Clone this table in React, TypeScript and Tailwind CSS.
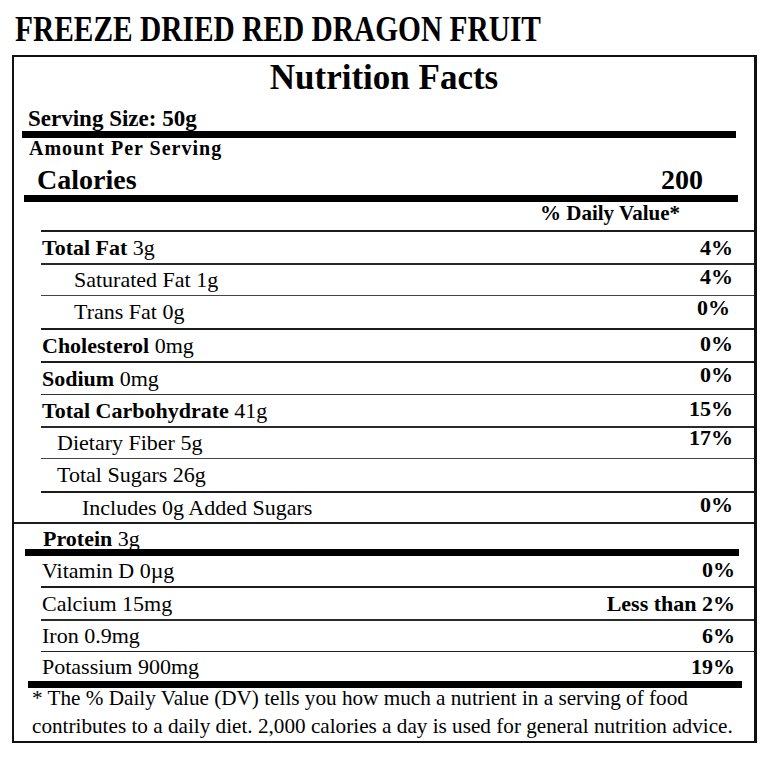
type Row = {
  label: string;
  amount: string;
  bold?: boolean;
  indent: string;
  dv: string;
  box: string;
  dvShift?: string;
};

const fatCarbRows: Row[] = [
  { label: "Total Fat", amount: "3g", bold: true, indent: "pl-[1px]", dv: "4%", box: "h-[33px] border-t-2 border-[#1c1c1c]" },
  { label: "Saturated Fat", amount: "1g", indent: "pl-[33px]", dv: "4%", box: "h-[32px] border-t-2 border-[#2a2a2a]", dvShift: "mb-[6px]" },
  { label: "Trans Fat", amount: "0g", indent: "pl-[33px]", dv: "0%", box: "h-[33px] border-t border-[#444]", dvShift: "mb-[8px] mr-[3px]" },
  { label: "Cholesterol", amount: "0mg", bold: true, indent: "pl-[1px]", dv: "0%", box: "h-[33px] border-t-2 border-[#1c1c1c]", dvShift: "mb-[3px]" },
  { label: "Sodium", amount: "0mg", bold: true, indent: "pl-[1px]", dv: "0%", box: "h-[33px] border-t-2 border-[#1c1c1c]", dvShift: "mb-[7px]" },
  { label: "Total Carbohydrate", amount: "41g", bold: true, indent: "pl-[1px]", dv: "15%", box: "h-[32px] border-t border-[#333]", dvShift: "mb-[3px]" },
  { label: "Dietary Fiber", amount: "5g", indent: "pl-[16px]", dv: "17%", box: "h-[32px] border-t-2 border-[#2a2a2a]", dvShift: "mb-[11px]" },
  { label: "Total Sugars", amount: "26g", indent: "pl-[16px]", dv: "", box: "h-[33px] border-t border-[#444]" },
  { label: "Includes 0g Added Sugars", amount: "", indent: "pl-[41px]", dv: "0%", box: "h-[31px] border-t-2 border-[#1c1c1c]", dvShift: "mb-[6px]" },
];

const mineralRows: Row[] = [
  { label: "Vitamin D", amount: "0µg", indent: "pl-[1px]", dv: "0%", box: "h-[30px]", dvShift: "mb-[3px]" },
  { label: "Calcium", amount: "15mg", indent: "pl-[1px]", dv: "Less than 2%", box: "h-[33px] border-t-2 border-[#1c1c1c]" },
  { label: "Iron", amount: "0.9mg", indent: "pl-[1px]", dv: "6%", box: "h-[32px] border-t-2 border-[#2a2a2a]" },
  { label: "Potassium", amount: "900mg", indent: "pl-[1px]", dv: "19%", box: "h-[30px] border-t border-[#222]" },
];

function NutrientRow({ row, pr }: { row: Row; pr: string }) {
  return (
    <div className={`flex items-center justify-between ml-[27px] ${row.box}`}>
      <span className={`${row.indent} leading-[30px] whitespace-nowrap`}>
        {row.bold ? <span className="font-bold">{row.label}</span> : row.label}
        {row.amount ? ` ${row.amount}` : ""}
      </span>
      <span className={`font-bold leading-[24px] whitespace-nowrap ${pr} ${row.dvShift ?? ""}`}>{row.dv}</span>
    </div>
  );
}

export default function App() {
  return (
    <div className="min-h-screen bg-white text-black font-['Liberation_Serif','Times_New_Roman',serif]">
      <div className="h-[50px] pt-[10px] pl-[15px]">
        <span className="inline-block origin-left scale-x-[0.84] whitespace-nowrap text-[35px] leading-[40px] font-bold">
          FREEZE DRIED RED DRAGON FRUIT
        </span>
      </div>

      <div className="ml-[12px] mt-[5px] w-[745px] border-t-2 border-l-2 border-r-[3px] border-b-2 border-[#111]">
        <h1 className="h-[42px] text-center text-[35px] leading-[42px] font-bold">Nutrition Facts</h1>

        <div className="h-[32px] pt-[8px] pl-[14px] text-[23px] leading-[24px] font-bold">Serving Size: 50g</div>
        <div className="h-[7px] ml-[8px] mr-[18px] bg-black" />

        <div className="h-[21px] pl-[15px] text-[20px] leading-[21px] font-bold tracking-[1px]">Amount Per Serving</div>
        <div className="h-[36px] pt-[5px] pl-[23px] pr-[51px] flex justify-between text-[28px] leading-[31px] font-bold">
          <span>Calories</span>
          <span>200</span>
        </div>
        <div className="h-[7px] ml-[10px] mr-[16px] bg-black" />

        <div className="h-[28px] pr-[74px] text-right text-[21px] leading-[22px] font-bold">% Daily Value*</div>

        <div className="text-[22px]">
          {fatCarbRows.map((r) => (
            <NutrientRow key={r.label} row={r} pr="pr-[21px]" />
          ))}
        </div>

        <div className="h-[27px] border-t-2 border-[#1c1c1c] pt-[3px] pl-[29px] text-[22px] leading-[24px]">
          <span className="font-bold">Protein</span> 3g
        </div>
        <div className="h-[7px] ml-[11px] mr-[15px] bg-black" />

        <div className="text-[22px]">
          {mineralRows.map((r) => (
            <NutrientRow key={r.label} row={r} pr="pr-[19px]" />
          ))}
        </div>
        <div className="h-[7px] ml-[14px] mr-[12px] bg-black" />

        <p className="h-[57px] -mt-[4px] pl-[18px] text-[21.2px] leading-[28px] whitespace-nowrap">
          * The % Daily Value (DV) tells you how much a nutrient in a serving of food
          <br />
          contributes to a daily diet. 2,000 calories a day is used for general nutrition advice.
        </p>
      </div>
    </div>
  );
}
